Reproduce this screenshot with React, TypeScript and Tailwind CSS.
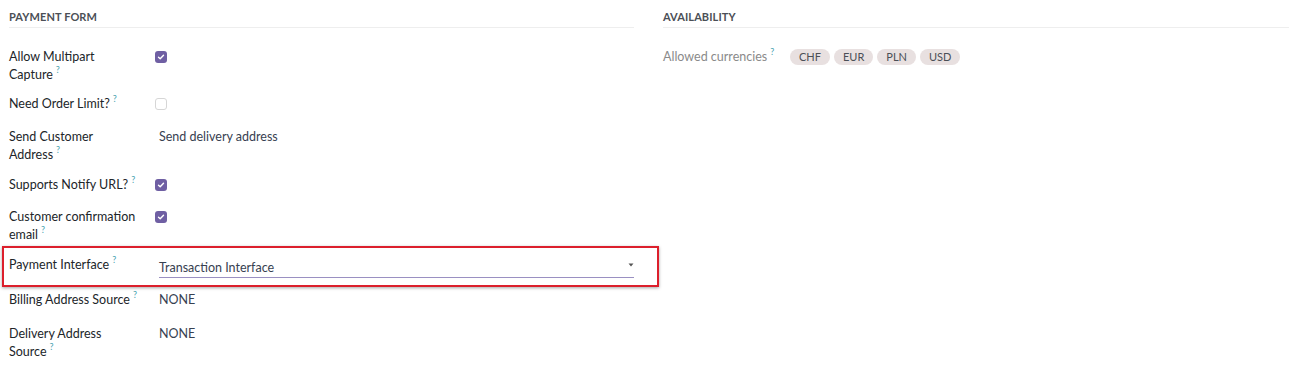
const Help = () => (
  <span className="inline-block ml-[3px] text-[9px] leading-none text-[#4aa3b0] relative -top-[6px]">?</span>
);

function Checkbox({ checked }: { checked: boolean }) {
  return checked ? (
    <div className="w-[12px] h-[12px] rounded-[3px] bg-[#6f5fa3] flex items-center justify-center">
      <svg width="8" height="8" viewBox="0 0 8 8" fill="none">
        <path d="M1.5 4.2 L3.2 5.8 L6.5 2.2" stroke="white" strokeWidth="1.4" strokeLinecap="round" strokeLinejoin="round" />
      </svg>
    </div>
  ) : (
    <div className="w-[12px] h-[12px] rounded-[3px] border border-[#d6d6d6] bg-white" />
  );
}

function Row({
  label,
  children,
  h,
}: {
  label: React.ReactNode;
  children: React.ReactNode;
  h: string;
}) {
  return (
    <div className={`flex ${h}`}>
      <div className="w-[150px] shrink-0 leading-[18px] text-[#212529]">{label}</div>
      <div className="flex-1 leading-[18px]">{children}</div>
    </div>
  );
}

export default function App() {
  return (
    <div
      className="w-[1299px] h-[377px] bg-white flex text-[12.5px] text-[#374151]"
      style={{ fontFamily: "Lato, 'Open Sans', sans-serif" }}
    >
      {/* left group */}
      <div className="w-[654px] pl-[9px] pr-[20px] pt-[9px]">
        <div className="text-[11px] font-bold text-[#4b4f56] tracking-[0.1px] pb-[1px] border-b border-[#eeeeee]">
          PAYMENT FORM
        </div>

        <div className="pt-[20px]">
          <Row h="h-[47px]" label={<>Allow Multipart<br />Capture<Help /></>}>
            <div className="pt-[3px] -ml-[4px]"><Checkbox checked /></div>
          </Row>
          <Row h="h-[33px]" label={<>Need Order Limit?<Help /></>}>
            <div className="pt-[3px] -ml-[4px]"><Checkbox checked={false} /></div>
          </Row>
          <Row h="h-[48px]" label={<>Send Customer<br />Address<Help /></>}>
            <span className="text-[#374151]">Send delivery address</span>
          </Row>
          <Row h="h-[32px]" label={<>Supports Notify URL?<Help /></>}>
            <div className="pt-[3px] -ml-[4px]"><Checkbox checked /></div>
          </Row>
          <Row h="h-[48px]" label={<>Customer confirmation<br />email<Help /></>}>
            <div className="pt-[3px] -ml-[4px]"><Checkbox checked /></div>
          </Row>

          {/* highlighted select row */}
          <div className="-ml-[7px] -mr-[25px] mt-[-10px] h-[41px] border-2 border-[#dc1f2c] shadow-[0_1px_3px_rgba(0,0,0,0.35)] flex pl-[5px] pt-[8px]">
            <div className="w-[150px] shrink-0 leading-[18px] text-[#212529]">
              Payment Interface<Help />
            </div>
            <div className="w-[475px] h-[22px] border-b border-[#9a90c2] flex items-start justify-between pt-[4px]">
              <span className="leading-[16px] text-[#374151]">Transaction Interface</span>
              <svg width="8" height="8" viewBox="0 0 8 8" className="mt-[1px] mr-[-1px]">
                <path d="M1.5 2.5 L6.5 2.5 L4 5.5 Z" fill="#555" />
              </svg>
            </div>
          </div>

          <div className="h-[38px] pt-[4px]">
            <div className="flex">
              <div className="w-[150px] shrink-0 leading-[18px] text-[#212529] whitespace-nowrap">
                Billing Address Source<Help />
              </div>
              <div className="leading-[18px] text-[#374151]">NONE</div>
            </div>
          </div>
          <Row h="h-[40px]" label={<>Delivery Address<br />Source<Help /></>}>
            <span className="text-[#374151]">NONE</span>
          </Row>
        </div>
      </div>

      {/* right group */}
      <div className="flex-1 pl-[9px] pr-[10px] pt-[9px]">
        <div className="text-[11px] font-bold text-[#4b4f56] tracking-[0.1px] pb-[1px] border-b border-[#eeeeee]">
          AVAILABILITY
        </div>
        <div className="pt-[20px] flex">
          <div className="w-[127px] shrink-0 leading-[18px] text-[#8a8a8a]">
            Allowed currencies<Help />
          </div>
          <div className="flex gap-[4px] pt-[1px]">
            {["CHF", "EUR", "PLN", "USD"].map((c) => (
              <span
                key={c}
                className="h-[16px] px-[9px] rounded-full bg-[#e8e0e0] text-[11px] leading-[16px] text-[#4b4f56]"
              >
                {c}
              </span>
            ))}
          </div>
        </div>
      </div>
    </div>
  );
}
